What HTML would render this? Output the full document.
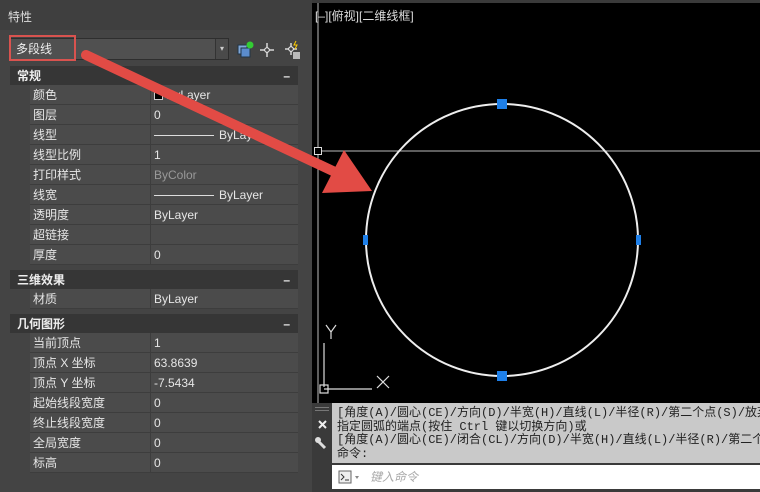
<!DOCTYPE html>
<html><head><meta charset="utf-8"><style>
*{margin:0;padding:0;box-sizing:border-box}
body{width:760px;height:492px;overflow:hidden;background:#3a3a3a;font-family:"Liberation Sans","Noto Sans CJK SC",sans-serif;position:relative}
.abs{position:absolute}
#panel{left:0;top:0;width:312px;height:492px;background:#444}
.title{left:0;top:0;width:312px;height:30px;background:#3f3f3f;color:#ddd;font-size:12px;line-height:14px;padding:10px 0 0 8px}
.combo{left:9px;top:38px;width:220px;height:22px;background:#505050;border:1px solid #2e2e2e;color:#eee;font-size:12px;line-height:20px;padding:0 0 0 6px}
.combo .dd{position:absolute;right:0;top:0;width:13px;height:20px;border-left:1px solid #333;background:#4a4a4a;color:#ccc;font-size:8px;text-align:center;line-height:20px}
.hl{left:9px;top:35px;width:67px;height:26px;border:2px solid #d9534f}
.hdr{left:10px;width:288px;height:19px;background:#363636;color:#eee;font-size:12px;line-height:20px;font-weight:bold;padding:0 0 0 7px}
.hdr span{position:absolute;right:8px;top:0}
.row{left:30px;width:268px;height:20px;background:#4b4b4b;border-bottom:1px solid #3d3d3d;font-size:12px;line-height:21px;color:#e6e6e6}
.row .l{position:absolute;left:3px;top:0}
.row .v{position:absolute;left:120px;top:0;width:148px;height:19px;border-left:1px solid #3d3d3d;padding:0 0 0 3px}
.grey{color:#999}
.ln{display:inline-block;width:60px;border-top:1px solid #ddd;vertical-align:middle;margin-right:5px}
#vp{left:312px;top:3px;width:448px;height:400px;background:#000}
#cmd{left:312px;top:403px;width:448px;height:89px;background:#3a3a3a}
.cl{left:332px;top:403px;width:428px;height:60px;background:#c9c9c9;font-family:"Liberation Mono","Noto Sans CJK SC",monospace;font-size:12px;line-height:13.5px;color:#222;padding:4px 0 0 5px;white-space:nowrap;overflow:hidden}
.inp{left:332px;top:465px;width:428px;height:24px;background:#fff;color:#aaa;font-size:12px;line-height:24px;font-style:italic;padding:0 0 0 38px}
</style></head><body>
<div id="panel" class="abs"></div>
<div class="abs title">特性</div>
<div class="abs combo">多段线<div class="dd">▾</div></div>
<div class="abs hl"></div>
<svg class="abs" style="left:236px;top:40px" width="70" height="20">
<rect x="2" y="5" width="9" height="9" fill="#7fa7d8" stroke="#234"/><rect x="5" y="8" width="9" height="9" fill="#5b8ccc" stroke="#234"/><circle cx="14" cy="5" r="3.5" fill="#3c3"/>
<g stroke="#eee" stroke-width="1.3"><line x1="31" y1="3" x2="31" y2="17"/><line x1="24" y1="10" x2="38" y2="10"/></g><circle cx="31" cy="10" r="2.3" fill="#444" stroke="#eee"/>
<g stroke="#eee" stroke-width="1.3"><line x1="55" y1="3" x2="55" y2="15"/><line x1="49" y1="9" x2="61" y2="9"/></g><circle cx="55" cy="9" r="2.3" fill="#444" stroke="#eee"/><rect x="57" y="12" width="7" height="7" fill="#bbb"/><path d="M60 1 l-2 4 h3 l-2 4" stroke="#fc0" fill="none"/>
</svg>
<div class="abs hdr" style="top:66px">常规<span>–</span></div>
<div class="abs row" style="top:85px"><span class="l">颜色</span><span class="v"><span style="display:inline-block;width:9px;height:9px;background:#000;border:1px solid #ccc;vertical-align:-1px"></span> ByLayer</span></div>
<div class="abs row" style="top:105px"><span class="l">图层</span><span class="v">0</span></div>
<div class="abs row" style="top:125px"><span class="l">线型</span><span class="v"><span class="ln"></span>ByLayer</span></div>
<div class="abs row" style="top:145px"><span class="l">线型比例</span><span class="v">1</span></div>
<div class="abs row" style="top:165px"><span class="l">打印样式</span><span class="v grey">ByColor</span></div>
<div class="abs row" style="top:185px"><span class="l">线宽</span><span class="v"><span class="ln"></span>ByLayer</span></div>
<div class="abs row" style="top:205px"><span class="l">透明度</span><span class="v">ByLayer</span></div>
<div class="abs row" style="top:225px"><span class="l">超链接</span><span class="v"></span></div>
<div class="abs row" style="top:245px"><span class="l">厚度</span><span class="v">0</span></div>
<div class="abs hdr" style="top:270px">三维效果<span>–</span></div>
<div class="abs row" style="top:289px"><span class="l">材质</span><span class="v">ByLayer</span></div>
<div class="abs hdr" style="top:314px">几何图形<span>–</span></div>
<div class="abs row" style="top:333px"><span class="l">当前顶点</span><span class="v">1</span></div>
<div class="abs row" style="top:353px"><span class="l">顶点 X 坐标</span><span class="v">63.8639</span></div>
<div class="abs row" style="top:373px"><span class="l">顶点 Y 坐标</span><span class="v">-7.5434</span></div>
<div class="abs row" style="top:393px"><span class="l">起始线段宽度</span><span class="v">0</span></div>
<div class="abs row" style="top:413px"><span class="l">终止线段宽度</span><span class="v">0</span></div>
<div class="abs row" style="top:433px"><span class="l">全局宽度</span><span class="v">0</span></div>
<div class="abs row" style="top:453px"><span class="l">标高</span><span class="v">0</span></div>
<div id="vp" class="abs"></div>
<svg class="abs" style="left:312px;top:3px" width="448" height="400">
<line x1="6" y1="0" x2="6" y2="400" stroke="#bbb"/>
<line x1="6" y1="148" x2="448" y2="148" stroke="#bbb"/>
<rect x="2.5" y="144.5" width="7" height="7" fill="#000" stroke="#ddd"/>
<circle cx="190" cy="237" r="136" fill="none" stroke="#eee" stroke-width="2"/>
<rect x="185" y="96" width="10" height="10" fill="#1e7fe8"/>
<rect x="185" y="368" width="10" height="10" fill="#1e7fe8"/>
<rect x="51" y="232" width="5" height="10" fill="#1e7fe8"/>
<rect x="324" y="232" width="5" height="10" fill="#1e7fe8"/>
<g stroke="#ddd" stroke-width="1.2" fill="none">
<line x1="12" y1="340" x2="12" y2="384"/><line x1="12" y1="386" x2="60" y2="386"/>
<rect x="8" y="382" width="8" height="8"/>
<path d="M14 322 l5 7 l5 -7 M19 329 v7"/>
<path d="M65 373 l12 12 M77 373 l-12 12"/>
</g>
<text x="3" y="17" fill="#ddd" font-size="12" font-family="Liberation Sans,Noto Sans CJK SC,sans-serif">[–][俯视][二维线框]</text>
</svg>
<svg class="abs" style="left:0;top:0" width="420" height="220">
<line x1="86" y1="55" x2="335" y2="172" stroke="#e24b45" stroke-width="10" stroke-linecap="round"/>
<polygon points="372,191 322,193 344,150" fill="#e24b45"/>
</svg>
<div id="cmd" class="abs"></div>
<svg class="abs" style="left:312px;top:403px" width="20" height="60">
<g fill="#777"><rect x="3" y="4" width="14" height="1"/><rect x="3" y="7" width="14" height="1"/></g>
<path d="M7 18 l7 7 M14 18 l-7 7" stroke="#eee" stroke-width="2"/>
<path d="M6 38 l7 7" stroke="#ddd" stroke-width="3"/><circle cx="6" cy="37" r="3" fill="#ddd"/>
</svg>
<div class="abs cl">[角度(A)/圆心(CE)/方向(D)/半宽(H)/直线(L)/半径(R)/第二个点(S)/放弃<br>指定圆弧的端点(按住 Ctrl 键以切换方向)或<br>[角度(A)/圆心(CE)/闭合(CL)/方向(D)/半宽(H)/直线(L)/半径(R)/第二个点<br>命令:</div>
<div class="abs inp">键入命令</div>
<svg class="abs" style="left:338px;top:470px" width="28" height="16"><rect x="1" y="1" width="12" height="12" fill="#eee" stroke="#666"/><path d="M3 4 l3 3 l-3 3 M7 10 h4" stroke="#333" fill="none"/><path d="M17 6 l2 3 l2 -3z" fill="#888"/></svg>
</body></html>
